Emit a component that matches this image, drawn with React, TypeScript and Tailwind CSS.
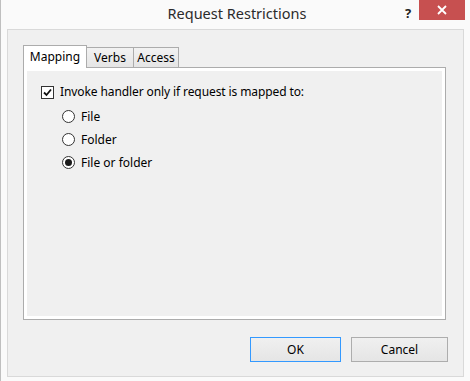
import React from 'react';

const font = { fontFamily: '"Noto Sans", "Open Sans", sans-serif' };

const Radio = ({ label, checked }: { label: string; checked?: boolean }) => (
    <div className="flex items-center h-[23px]">
        <div className="w-[13px] h-[13px] rounded-full border border-[#333] bg-white flex items-center justify-center">
            {checked && <div className="w-[7px] h-[7px] rounded-full bg-[#1a1a1a]" />}
        </div>
        <span className="ml-[6px] text-[12px] text-black">{label}</span>
    </div>
);

const App = () => {
    return (
        <div className="w-[470px] h-[381px] bg-[#fafafa] border-l border-[#bfbfbf] flex flex-col" style={font}>
            {/*title bar*/}
            <div className="relative h-[29px] flex justify-center items-center">
                <span className="text-[14.5px] text-[#2b2b2b] ml-[3px] -mt-[1px]">Request Restrictions</span>
                <span className="absolute left-[404px] top-[4px] text-[13px] font-bold text-[#222]">?</span>
                <div className="absolute left-[418px] top-0 w-[46px] h-[20px] bg-[#c75050] flex items-center justify-center">
                    <svg width="10" height="10" viewBox="0 0 10 10">
                        <path d="M1 1 L9 9 M9 1 L1 9" stroke="white" strokeWidth="1.8" />
                    </svg>
                </div>
            </div>

            {/*content*/}
            <div className="ml-[6px] w-[457px] h-[348px] border border-[#d9d9d9] bg-[#f0f0f0] flex flex-col pl-[15px] pt-[15px]">
                {/*tabs*/}
                <div className="flex items-end text-[12px] text-black relative z-10">
                    <div className="h-[23px] w-[64px] border-x border-t border-[#acacac] bg-white -mb-px flex items-center justify-center">Mapping</div>
                    <div className="h-[20px] w-[47px] border-t border-r border-[#acacac] bg-gradient-to-b from-[#f2f2f2] to-[#e5e5e5] flex items-center justify-center">Verbs</div>
                    <div className="h-[20px] w-[45px] border-t border-r border-[#acacac] bg-gradient-to-b from-[#f2f2f2] to-[#e5e5e5] flex items-center justify-center">Access</div>
                </div>

                {/*panel*/}
                <div className="w-[423px] h-[253px] border border-[#acacac] bg-white p-[3px]">
                    <div className="w-full h-full bg-[#f0f0f0] pl-[14px] pt-[11px]">
                        <div className="flex items-center h-[20px]">
                            <div className="w-[13px] h-[13px] border border-[#333] bg-white flex items-center justify-center">
                                <svg width="9" height="9" viewBox="0 0 9 9">
                                    <path d="M1 4.5 L3.5 7 L8 1.5" fill="none" stroke="#111" strokeWidth="1.8" />
                                </svg>
                            </div>
                            <span className="ml-[6px] text-[12px] tracking-[-0.1px] text-black">Invoke handler only if request is mapped to:</span>
                        </div>
                        <div className="pl-[21px] mt-[3px]">
                            <Radio label="File" />
                            <Radio label="Folder" />
                            <Radio label="File or folder" checked />
                        </div>
                    </div>
                </div>

                {/*buttons*/}
                <div className="flex gap-[10px] mt-[17px] ml-[227px] text-[12px] text-black">
                    <button className="w-[91px] h-[25px] border border-[#3399ff] bg-gradient-to-b from-[#f0f0f0] to-[#e5e5e5]">OK</button>
                    <button className="w-[97px] h-[25px] border border-[#adadad] bg-gradient-to-b from-[#f0f0f0] to-[#e5e5e5]">Cancel</button>
                </div>
            </div>
        </div>
    );
};

export default App;
